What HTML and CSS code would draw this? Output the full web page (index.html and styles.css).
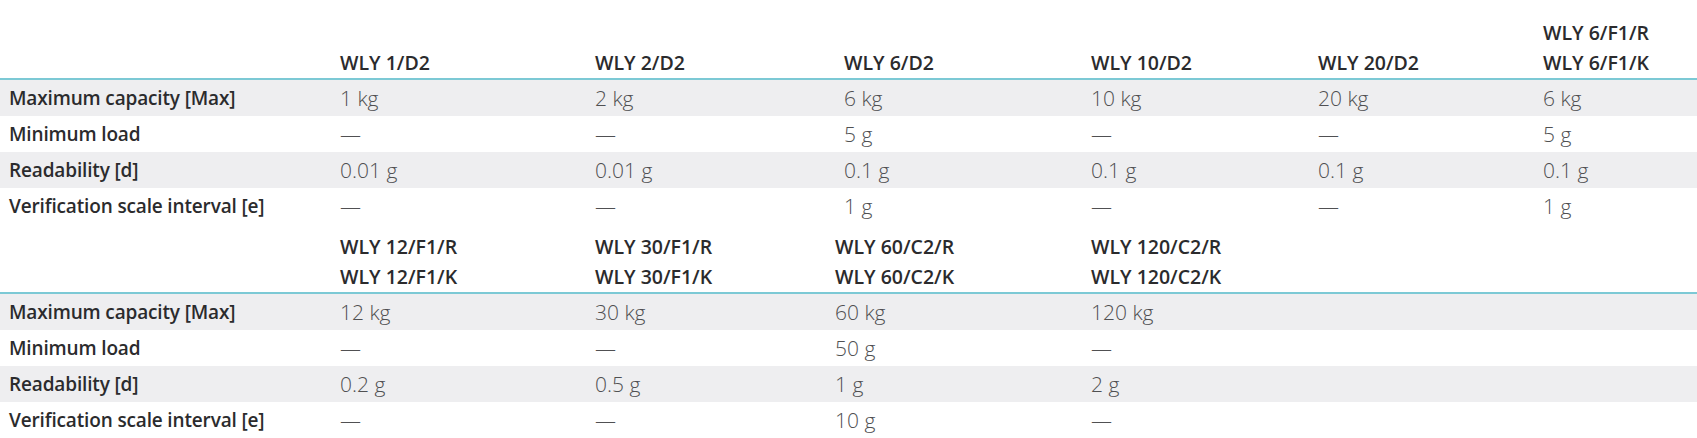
FILE: index.html
```html
<!DOCTYPE html>
<html lang="en">
<head>
<meta charset="utf-8">
<title>WLY specifications</title>
<link rel="stylesheet" href="styles.css">
</head>
<body>
<main class="page">
  <table class="spec spec-a">
    <colgroup>
      <col class="c-label"><col class="a1"><col class="a2"><col class="a3"><col class="a4"><col class="a5"><col class="a6">
    </colgroup>
    <thead>
      <tr>
        <th></th>
        <th>WLY 1/D2</th>
        <th>WLY 2/D2</th>
        <th>WLY 6/D2</th>
        <th>WLY 10/D2</th>
        <th>WLY 20/D2</th>
        <th>WLY 6/F1/R<br>WLY 6/F1/K</th>
      </tr>
    </thead>
    <tbody>
      <tr class="alt">
        <td class="label">Maximum capacity [Max]</td>
        <td>1 kg</td><td>2 kg</td><td>6 kg</td><td>10 kg</td><td>20 kg</td><td>6 kg</td>
      </tr>
      <tr>
        <td class="label">Minimum load</td>
        <td>—</td><td>—</td><td>5 g</td><td>—</td><td>—</td><td>5 g</td>
      </tr>
      <tr class="alt">
        <td class="label">Readability [d]</td>
        <td>0.01 g</td><td>0.01 g</td><td>0.1 g</td><td>0.1 g</td><td>0.1 g</td><td>0.1 g</td>
      </tr>
      <tr>
        <td class="label">Verification scale interval [e]</td>
        <td>—</td><td>—</td><td>1 g</td><td>—</td><td>—</td><td>1 g</td>
      </tr>
    </tbody>
  </table>

  <table class="spec spec-b">
    <colgroup>
      <col class="c-label"><col class="b1"><col class="b2"><col class="b3"><col class="b4"><col class="b5">
    </colgroup>
    <thead>
      <tr>
        <th></th>
        <th>WLY 12/F1/R<br>WLY 12/F1/K</th>
        <th>WLY 30/F1/R<br>WLY 30/F1/K</th>
        <th>WLY 60/C2/R<br>WLY 60/C2/K</th>
        <th>WLY 120/C2/R<br>WLY 120/C2/K</th>
        <th></th>
      </tr>
    </thead>
    <tbody>
      <tr class="alt">
        <td class="label">Maximum capacity [Max]</td>
        <td>12 kg</td><td>30 kg</td><td>60 kg</td><td>120 kg</td><td></td>
      </tr>
      <tr>
        <td class="label">Minimum load</td>
        <td>—</td><td>—</td><td>50 g</td><td>—</td><td></td>
      </tr>
      <tr class="alt">
        <td class="label">Readability [d]</td>
        <td>0.2 g</td><td>0.5 g</td><td>1 g</td><td>2 g</td><td></td>
      </tr>
      <tr>
        <td class="label">Verification scale interval [e]</td>
        <td>—</td><td>—</td><td>10 g</td><td>—</td><td></td>
      </tr>
    </tbody>
  </table>
</main>
</body>
</html>
```

FILE: styles.css
```css
html, body {
  margin: 0;
  padding: 0;
  background: #ffffff;
}

body {
  font-family: "Open Sans", "Noto Sans", "Liberation Sans", sans-serif;
  color: #2b2b2d;
}

.page {
  padding-top: 10px;
  width: 1697px;
}

.spec {
  width: 1697px;
  border-collapse: collapse;
  table-layout: fixed;
}

.c-label { width: 332px; }

.a1 { width: 255px; }
.a2 { width: 249px; }
.a3 { width: 247px; }
.a4 { width: 227px; }
.a5 { width: 225px; }
.a6 { width: 162px; }

.b1 { width: 255px; }
.b2 { width: 240px; }
.b3 { width: 256px; }
.b4 { width: 227px; }
.b5 { width: 387px; }

.spec th {
  text-align: left;
  vertical-align: bottom;
  font-weight: 600;
  font-size: 19.5px;
  line-height: 30px;
  padding: 8px 8px 0 8px;
  color: #2b2b2d;
  border-bottom: 2px solid #7cc9d5;
  white-space: nowrap;
}

.spec td {
  height: 36px;
  padding: 0 8px;
  font-size: 21px;
  line-height: 36px;
  font-weight: 300;
  color: #505052;
  white-space: nowrap;
  vertical-align: middle;
}

.spec td.label {
  font-size: 19px;
  letter-spacing: -0.15px;
  font-weight: 600;
  color: #2b2b2d;
  padding-left: 9px;
}

.spec tr.alt td {
  background: #eeeef0;
}
```
